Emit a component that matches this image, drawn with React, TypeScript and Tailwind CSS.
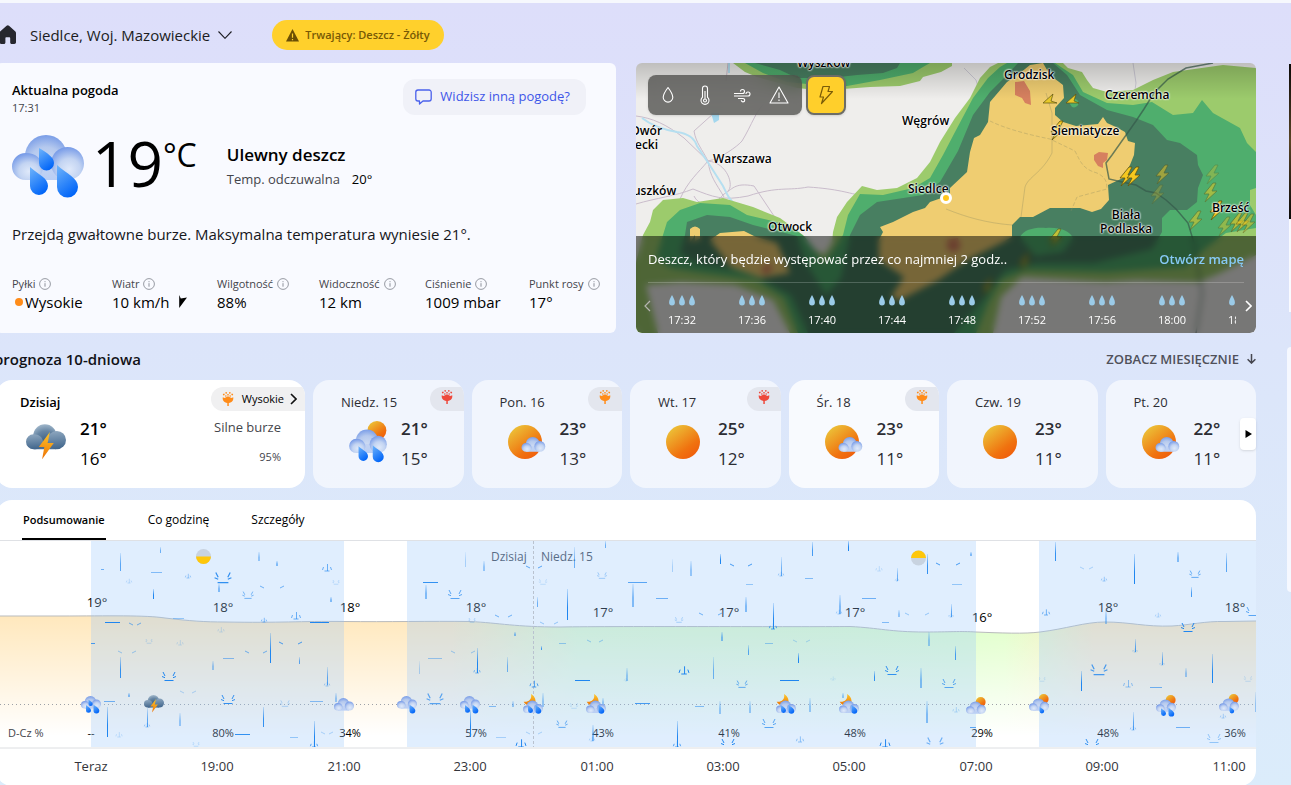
import { useState } from "react"
import type { SVGProps } from "react"

type Sky = "sun" | "moon" | "none"

interface WeatherIconProps extends SVGProps<SVGSVGElement> {
  sky?: Sky
  drops?: number
  storm?: boolean
}

interface Day {
  name: string
  high: string
  low: string
  icon: "rain" | "partly" | "sun"
  pollen?: "orange" | "red"
  bright?: boolean
}

const stats = [
  { label: "Pyłki", value: "Wysokie", dot: true },
  { label: "Wiatr", value: "10 km/h", arrow: true },
  { label: "Wilgotność", value: "88%" },
  { label: "Widoczność", value: "12 km" },
  { label: "Ciśnienie", value: "1009 mbar" },
  { label: "Punkt rosy", value: "17°" },
]

const days: Day[] = [
  { name: "Niedz. 15", high: "21°", low: "15°", icon: "rain", pollen: "red" },
  { name: "Pon. 16", high: "23°", low: "13°", icon: "partly", pollen: "orange" },
  { name: "Wt. 17", high: "25°", low: "12°", icon: "sun", pollen: "red" },
  { name: "Śr. 18", high: "23°", low: "11°", icon: "partly", pollen: "orange", bright: true },
  { name: "Czw. 19", high: "23°", low: "11°", icon: "sun" },
  { name: "Pt. 20", high: "22°", low: "11°", icon: "partly" },
]

const rainTimes = ["17:32", "17:36", "17:40", "17:44", "17:48", "17:52", "17:56", "18:00", "18:04"]

const tabs = ["Podsumowanie", "Co godzinę", "Szczegóły"]

const hours = [
  { x: 91, time: "Teraz", temp: "19°", y: 66, chance: "--" },
  { x: 217, time: "19:00", temp: "18°", y: 71, chance: "80%" },
  { x: 344, time: "21:00", temp: "18°", y: 71, chance: "34%" },
  { x: 470, time: "23:00", temp: "18°", y: 71, chance: "57%" },
  { x: 597, time: "01:00", temp: "17°", y: 76, chance: "43%" },
  { x: 723, time: "03:00", temp: "17°", y: 76, chance: "41%" },
  { x: 849, time: "05:00", temp: "17°", y: 76, chance: "48%" },
  { x: 976, time: "07:00", temp: "16°", y: 81, chance: "29%" },
  { x: 1102, time: "09:00", temp: "18°", y: 71, chance: "48%" },
  { x: 1229, time: "11:00", temp: "18°", y: 71, chance: "36%" },
]

const chartIcons: { x: number; y: number; sky: Sky; drops: number; storm?: boolean }[] = [
  { x: 91, y: 155, sky: "none", drops: 3 },
  { x: 154, y: 154, sky: "none", drops: 0, storm: true },
  { x: 344, y: 157, sky: "none", drops: 0 },
  { x: 407, y: 155, sky: "none", drops: 1 },
  { x: 470, y: 155, sky: "none", drops: 2 },
  { x: 533, y: 153, sky: "moon", drops: 2 },
  { x: 596, y: 153, sky: "moon", drops: 1 },
  { x: 786, y: 153, sky: "moon", drops: 2 },
  { x: 849, y: 153, sky: "moon", drops: 1 },
  { x: 976, y: 156, sky: "sun", drops: 0 },
  { x: 1039, y: 153, sky: "sun", drops: 1 },
  { x: 1166, y: 154, sky: "sun", drops: 2 },
  { x: 1229, y: 153, sky: "sun", drops: 1 },
]

// [x, top, bottom, opacity]
const streaks = [
  [120, 12, 30, 0.7], [160, 6, 12, 0.6], [153, 48, 58, 1], [258, 11, 20, 0.4], [276, 20, 25, 0.5], [218, 43, 51, 0.5],
  [270, 92, 122, 1], [120, 116, 137, 0.9], [212, 120, 129, 0.4], [299, 116, 123, 0.7], [327, 126, 144, 0.7], [128, 152, 156, 0.5],
  [335, 152, 161, 0.4], [107, 166, 196, 1], [147, 167, 186, 0.7], [179, 172, 185, 0.4], [263, 166, 186, 0.9], [314, 180, 206, 1],
  [330, 56, 61, 0.5], [425, 44, 58, 0.5], [419, 120, 133, 0.3], [465, 11, 26, 0.3], [483, 20, 30, 0.4], [574, 6, 27, 0.6],
  [605, 0, 7, 0.6], [567, 48, 79, 1], [537, 56, 66, 0.6], [514, 91, 95, 0.5], [477, 107, 132, 1], [507, 116, 131, 0.6],
  [541, 105, 109, 0.8], [626, 127, 140, 0.4], [542, 152, 166, 0.4], [512, 160, 166, 0.4], [470, 169, 196, 1], [592, 184, 200, 0.5],
  [602, 157, 164, 0.4], [632, 43, 66, 0.5], [672, 18, 31, 0.3], [690, 20, 35, 0.4], [720, 13, 23, 1], [781, 16, 35, 0.6],
  [812, 1, 15, 0.8], [848, 0, 10, 1], [773, 62, 88, 1], [745, 56, 71, 0.5], [839, 54, 73, 0.5], [721, 91, 100, 0.5],
  [748, 104, 114, 0.7], [713, 116, 138, 0.6], [798, 112, 122, 1], [677, 180, 206, 1], [719, 160, 173, 0.4], [749, 160, 172, 0.4],
  [809, 157, 171, 0.4], [842, 152, 157, 0.4], [897, 27, 40, 0.6], [927, 13, 33, 0.9], [970, 11, 15, 0.5], [898, 69, 76, 0.4],
  [951, 63, 76, 0.7], [928, 91, 105, 0.4], [955, 105, 119, 0.8], [874, 130, 140, 0.9], [920, 127, 147, 0.5], [926, 160, 182, 0.5],
  [1055, 1, 20, 0.9], [1134, 13, 43, 1], [1177, 11, 21, 0.5], [1226, 12, 31, 0.7], [1191, 46, 56, 0.8], [1105, 69, 83, 0.4],
  [1135, 98, 111, 0.7], [1162, 111, 124, 0.7], [1212, 113, 142, 1], [1081, 130, 150, 1], [1185, 127, 136, 0.4], [1133, 171, 189, 0.7],
  [1255, 151, 171, 0.4],
]

// [left, right, y, opacity]
const puddles = [
  [101, 104, 28, 0.6], [151, 162, 31, 0.5], [105, 120, 81, 1], [173, 184, 77, 0.4], [310, 329, 81, 1], [223, 234, 117, 0.5],
  [104, 115, 160, 0.6], [235, 250, 193, 0.9], [310, 323, 160, 0.5], [290, 298, 196, 0.4], [207, 221, 206, 0.5], [423, 438, 41, 0.9],
  [91, 95, 102, 0.8], [428, 442, 117, 0.4], [575, 590, 139, 1], [559, 566, 102, 0.4], [489, 496, 165, 0.5], [496, 506, 196, 0.3],
  [635, 650, 162, 0.8], [628, 647, 41, 0.7], [656, 668, 57, 0.6], [746, 753, 43, 0.4], [805, 813, 37, 0.5], [765, 773, 102, 0.4],
  [780, 799, 139, 1], [695, 704, 165, 0.5], [862, 876, 57, 0.6], [952, 962, 43, 0.4], [882, 889, 81, 0.5], [970, 976, 186, 0.7],
  [1150, 1162, 146, 0.6], [1176, 1190, 186, 0.6], [1135, 1150, 206, 0.7],
]

// [x, base y, scale, opacity]
const splashes = [
  [223, 41, 1.2, 0.9], [248, 57, 0.8, 0.7], [169, 139, 1, 1], [228, 162, 1, 0.9], [285, 165, 0.7, 0.4], [149, 102, 0.5, 0.4],
  [196, 205, 0.5, 0.4], [336, 43, 0.5, 0.4], [455, 57, 1, 0.7], [435, 162, 1.2, 0.7], [602, 37, 0.7, 0.5], [543, 43, 0.6, 0.3],
  [472, 81, 0.5, 0.5], [562, 186, 0.8, 0.8], [574, 167, 0.6, 0.3], [679, 81, 0.6, 0.5], [742, 146, 0.8, 0.8], [769, 186, 1, 0.7],
  [728, 206, 1, 1], [892, 133, 1, 0.9], [949, 146, 1, 0.7], [935, 206, 1.2, 0.6], [1195, 36, 0.8, 0.8], [1188, 90, 1, 1],
  [1099, 133, 1.2, 0.8], [1042, 140, 0.5, 0.3], [1248, 140, 0.6, 0.3], [1092, 206, 1, 0.9], [1214, 201, 1, 0.4], [1253, 74, 1, 0.7],
]

const impacts = [
  [129, 42, 0.6, 0.4], [188, 37, 0.6, 0.7], [264, 81, 0.6, 0.9], [296, 78, 1, 0.7], [327, 30, 1, 0.7], [221, 91, 0.7, 0.3],
  [180, 104, 0.7, 0.3], [119, 196, 0.7, 0.3], [314, 206, 0.8, 1], [327, 145, 0.6, 0.7], [147, 186, 0.6, 0.7], [477, 132, 0.7, 0.9],
  [534, 146, 0.9, 0.9], [521, 206, 1.1, 1], [592, 200, 0.6, 0.5], [626, 140, 0.4, 0.4], [684, 133, 1.1, 1], [781, 35, 0.6, 0.7],
  [773, 88, 0.8, 1], [839, 73, 0.6, 0.6], [833, 139, 0.5, 0.3], [800, 201, 0.8, 0.6], [677, 206, 0.8, 1], [897, 40, 0.4, 0.7],
  [885, 206, 1.1, 1], [879, 30, 0.7, 0.3], [951, 76, 0.5, 0.7], [1046, 74, 0.8, 0.8], [1104, 40, 0.6, 0.7], [1158, 76, 0.6, 0.5],
  [1128, 146, 1, 0.5], [956, 171, 0.7, 0.4], [1223, 177, 0.6, 0.6], [1135, 111, 0.5, 0.7], [1162, 124, 0.5, 0.6], [1133, 189, 0.6, 0.7],
]

// [left, right, y, opacity]
const ticks = [
  [131, 139, 83, 0.6], [262, 282, 46, 0.6], [281, 300, 102, 0.8], [247, 265, 111, 0.6], [120, 134, 111, 0.4], [182, 194, 151, 0.3],
  [323, 331, 192, 0.3], [528, 540, 26, 0.7], [497, 510, 75, 0.6], [732, 750, 24, 0.8], [701, 720, 73, 0.6], [589, 601, 100, 0.4],
  [795, 808, 100, 0.3], [453, 473, 111, 0.4], [528, 540, 192, 0.3], [542, 556, 82, 0.4], [938, 958, 23, 0.8], [907, 927, 73, 0.4],
  [1082, 1091, 27, 0.3],
]

const curve =
  "M-4 75 L60 75 C110 75 145 74 165 77 C190 80 205 81 225 81 C280 82 300 80 344 80.5 S430 80 470 80.5 C500 82 515 86 560 86 C620 85 800 86 850 85.5 C880 87 890 91 925 91 C950 91 960 90 976 91 C1000 92 1025 93 1040 91 C1065 88 1085 81 1105 81 C1130 81 1145 86 1172 85 C1190 84 1205 80 1225 80.5 L1256 80"

function Gradients() {
  return (
    <svg width="0" height="0" className="absolute" aria-hidden="true">
      <defs>
        <radialGradient id="puffTop" cx="0.5" cy="0.7" r="0.75">
          <stop offset="0" stopColor="#cfdcf3" />
          <stop offset="0.55" stopColor="#b5c9ee" />
          <stop offset="1" stopColor="#6f95e6" />
        </radialGradient>
        <radialGradient id="puffSide" cx="0.55" cy="0.68" r="0.66">
          <stop offset="0" stopColor="#dfe9fa" />
          <stop offset="0.5" stopColor="#c3d4f2" />
          <stop offset="1" stopColor="#7a9de8" />
        </radialGradient>
        <linearGradient id="puffBase" x1="0" y1="0" x2="0" y2="1">
          <stop offset="0" stopColor="#c3d3f1" />
          <stop offset="1" stopColor="#b9cef5" />
        </linearGradient>
        <radialGradient id="stormTop" cx="0.55" cy="0.8" r="0.85">
          <stop offset="0" stopColor="#34587c" />
          <stop offset="0.6" stopColor="#6685a3" />
          <stop offset="1" stopColor="#aabfd1" />
        </radialGradient>
        <linearGradient id="stormSide" x1="0.3" y1="0" x2="0.4" y2="1">
          <stop offset="0" stopColor="#8ea7bf" />
          <stop offset="1" stopColor="#41668c" />
        </linearGradient>
        <linearGradient id="stormBase" x1="0" y1="0" x2="0" y2="1">
          <stop offset="0" stopColor="#3f6388" />
          <stop offset="1" stopColor="#4d7197" />
        </linearGradient>
        <linearGradient id="drop" x1="0.1" y1="0" x2="0.6" y2="1">
          <stop offset="0" stopColor="#6cb2fb" />
          <stop offset="1" stopColor="#0165f8" />
        </linearGradient>
        <linearGradient id="sun" x1="0.15" y1="0.1" x2="0.75" y2="0.9">
          <stop offset="0" stopColor="#ecc037" />
          <stop offset="0.75" stopColor="#f0720f" />
          <stop offset="1" stopColor="#f0620c" />
        </linearGradient>
        <linearGradient id="bolt" x1="0.5" y1="0" x2="0.4" y2="1">
          <stop offset="0" stopColor="#fcc62a" />
          <stop offset="1" stopColor="#ee7205" />
        </linearGradient>
      </defs>
    </svg>
  )
}

function Cloud({ storm = false }: { storm?: boolean }) {
  return (
    <>
      <circle cx="34" cy="21" r="21" fill={storm ? "url(#stormTop)" : "url(#puffTop)"} />
      <path d="M14 28h40v17H14z" fill={storm ? "url(#stormBase)" : "url(#puffBase)"} />
      <path d="M13.500 18C24 18 30 24 31 32c0 8-6 13-14 13h-3.500a13.500 13.500 0 0 1 0-27z" fill={storm ? "url(#stormSide)" : "url(#puffSide)"} />
      <circle cx="55.500" cy="28.500" r="16.500" fill={storm ? "url(#stormSide)" : "url(#puffSide)"} />
    </>
  )
}

function WeatherIcon({ sky = "none", drops = 0, storm = false, ...rest }: WeatherIconProps) {
  const singleShower = drops === 1 && sky === "sun"

  return (
    <svg viewBox={sky === "none" ? "0 0 72 64" : "0 -16 72 80"} aria-hidden="true" {...rest}>
      {sky === "sun" && <circle cx="53" cy="2" r="18" fill="url(#sun)" />}
      {sky === "moon" && <path d="M29-16c14 8 20 24 14 38-12 8-33 4-41-10 17 2 31-8 27-28z" fill="url(#bolt)" />}
      <g transform={sky === "moon" ? "translate(0 8)" : undefined}>
        <Cloud storm={storm} />
      </g>
      <g transform={sky === "moon" ? "translate(0 -7)" : undefined}>
        {drops === 3 && <path d="M27 13v15a7.500 7.500 0 1 0 15 0c0-6-7-10-15-15z" fill="url(#drop)" />}
        {drops >= 2 && <path d="M18 32v19a9 9 0 1 0 18 0c0-8-9-11-18-19z" fill="url(#drop)" />}
        {drops >= 1 && !singleShower && <path d="M45 30v22a10.500 10.500 0 1 0 21 0c0-9-11-13-21-22z" fill="url(#drop)" />}
        {singleShower && <path d="M38 30v16a8.500 8.500 0 1 0 17 0c0-7-9-9-17-16z" fill="url(#drop)" />}
      </g>
      {storm && <path d="M43 14 23 41h10l-4 22 21-29H39z" fill="url(#bolt)" />}
    </svg>
  )
}

function DayIcon({ icon }: { icon: Day["icon"] }) {
  if (icon === "rain") {
    return <WeatherIcon sky="sun" drops={2} className="-mb-1 h-[42px] w-[38px] shrink-0" />
  }
  return (
    <svg viewBox="0 0 38 34" className="h-[34px] w-[38px]" aria-hidden="true">
      <circle cx="17" cy="17" r="17" fill="url(#sun)" />
      {icon === "partly" && (
        <g transform="translate(13.500 12) scale(0.33)">
          <Cloud />
        </g>
      )}
    </svg>
  )
}

function PollenIcon({ color }: { color: string }) {
  return (
    <svg viewBox="0 0 12 14" className="h-3.5 w-3" fill={color} aria-hidden="true">
      <path d="M.8 5.200 2.600 6 6 4.200 9.400 6l1.800-.8c.6 3-1 5.300-4.400 5.800V14H5.300v-3C2 10.500.2 8.200.8 5.200z" />
      <path d="m.8 2 1.500-.5.5 1.500-1.500.5zM3.300.3 4.700 0l.4 1.400-1.400.3zM7.300 0l1.400.3-.4 1.400-1.400-.3zM9.700 1.500l1.500.5-.5 1.500-1.500-.5zM5.300 2h1.400v1.400H5.300zM3.300 3.200l1.300.4-.3 1.200-1.300-.4zM8.700 3.200l.3 1.200-1.300.4-.3-1.200z" />
    </svg>
  )
}

function InfoIcon() {
  return (
    <svg viewBox="0 0 12 12" className="h-3 w-3 shrink-0" fill="none" stroke="#8c8f99" aria-hidden="true">
      <circle cx="6" cy="6" r="5.400" strokeWidth="0.9" />
      <path d="M6 5.200v3.500M6 3.200v1" strokeWidth="1" />
    </svg>
  )
}

function Header() {
  return (
    <header className="flex h-[60px] items-center pt-1">
      <a href="#home" aria-label="Strona główna" className="mr-[13px] block">
        <svg viewBox="0 0 21 20" className="h-5 w-[21px]" fill="#26272e">
          <path d="M10.600.8a1.800 1.800 0 0 1 2.400 0l6.400 5.800c.4.4.6.8.6 1.400v9.300c0 1-.7 1.700-1.700 1.700h-2.600c-.9 0-1.500-.6-1.500-1.500v-4.300c0-.6-.4-1-1-1h-2.800c-.6 0-1 .4-1 1v4.300c0 .9-.6 1.500-1.500 1.500H5.200c-1 0-1.700-.7-1.700-1.700V8c0-.6.2-1 .6-1.400z" />
        </svg>
      </a>
      <button type="button" className="flex items-center gap-2 text-[15px] leading-6 text-[#1b1c22]">
        Siedlce, Woj. Mazowieckie
        <svg viewBox="0 0 14 8" className="h-2 w-3.5" fill="none" stroke="#1b1c22" strokeWidth="1.100">
          <path d="m.5.5 6.500 6.800L13.500.5" />
        </svg>
      </button>
      <button type="button" className="ml-10 flex h-[30px] items-center gap-1.5 rounded-full bg-[#ffd02c] px-3.5 text-[11px] font-semibold text-[#775905]">
        <svg viewBox="0 0 13 13" className="h-[13px] w-[13px]" aria-hidden="true">
          <path d="M6.500 0 13 12.600H0z" fill="#6b4f04" />
          <path d="M6.500 4.500v4.300M6.500 10v1.300" stroke="#ffd02c" strokeWidth="1.200" />
        </svg>
        Trwający: Deszcz - Żółty
      </button>
    </header>
  )
}

function CurrentWeather() {
  return (
    <section className="h-[270px] rounded-md bg-[#f9faff] p-4 text-black">
      <div className="flex h-9 items-start justify-between pr-3.5">
        <div>
          <h2 className="text-[13px] leading-[22px] font-semibold">Aktualna pogoda</h2>
          <p className="text-[11px] leading-[14px] text-[#44454b]">17:31</p>
        </div>
        <button type="button" className="flex h-9 items-center gap-2 rounded-xl bg-[#f0f1f8] pr-4 pl-3 text-[13px] text-[#3e56e8]">
          <svg viewBox="0 0 17 16" className="h-4 w-[17px]" fill="none" stroke="#4a61ec" strokeWidth="1.300" aria-hidden="true">
            <path d="M3 1h11a2.200 2.200 0 0 1 2.200 2.200v6.600A2.200 2.200 0 0 1 14 12H8l-3.500 3v-3H3A2.200 2.200 0 0 1 .8 9.800V3.200A2.200 2.200 0 0 1 3 1z" strokeLinejoin="round" />
          </svg>
          Widzisz inną pogodę?
        </button>
      </div>
      <div className="mt-3 flex h-20 items-center">
        <WeatherIcon drops={3} className="h-16 w-[72px]" />
        <div className="ml-2 flex items-start pb-2">
          <span className="text-[62px] leading-[72px]">19</span>
          <span className="mt-2.5 text-[32px] leading-9">°C</span>
        </div>
        <div className="ml-[30px]">
          <p className="text-[17px] leading-6 font-semibold">Ulewny deszcz</p>
          <p className="flex gap-3 text-[13px] leading-6 text-[#44454b]">
            Temp. odczuwalna <span className="text-black">20°</span>
          </p>
        </div>
      </div>
      <p className="mt-[15px] text-[15px] leading-6 text-[#16171c]">Przejdą gwałtowne burze. Maksymalna temperatura wyniesie 21°.</p>
      <dl className="mt-[30px] grid grid-cols-[100px_105px_102px_106px_104px_auto] whitespace-nowrap">
        {stats.map((stat) => (
          <div key={stat.label}>
            <dt className="flex items-center gap-1 text-[11px] leading-4 text-[#44454b]">
              {stat.label}
              <InfoIcon />
            </dt>
            <dd className="flex items-center text-[15px] leading-5">
              {stat.dot && <span className="mr-0.5 ml-[3px] h-2 w-2 rounded-full bg-[#ff8c1a]" />}
              {stat.value}
              {stat.arrow && (
                <svg viewBox="0 0 10 14" className="ml-2 h-3.5 w-2.5" aria-hidden="true">
                  <path d="M1.200 0 2.800 3.600 9 2.500 1.200 13z" fill="#000" />
                </svg>
              )}
            </dd>
          </div>
        ))}
      </dl>
    </section>
  )
}

const places = [
  { name: "Wyszków", className: "left-[161px] -top-2.5" },
  { name: "Grodzisk", className: "left-[368px] top-0.5" },
  { name: "Czeremcha", className: "left-[469px] top-[22px]" },
  { name: "Węgrów", className: "left-[266px] top-12" },
  { name: "Siemiatycze", className: "left-[415px] top-[58px]" },
  { name: "Warszawa", className: "left-[77px] top-[86px]" },
  { name: "Siedlce", className: "left-[272px] top-[116px]" },
  { name: "Otwock", className: "left-[132px] top-[154px]" },
  { name: "Brześć", className: "left-[576px] top-[135px]" },
]

const bolts = [
  [484, 104, 1], [491, 104, 1], [520, 102, 0.5], [515, 122, 0.25], [570, 102, 0.3], [568, 120, 0.5], [574, 138, 1],
  [553, 148, 0.5], [582, 154, 0.4], [594, 150, 0.6], [600, 150, 0.6], [606, 151, 0.5], [415, 58, 1], [413, 166, 0.7], [382, 190, 0.5],
  [345, 215, 0.5],
]

function MapArt() {
  return (
    <svg viewBox="0 0 620 270" preserveAspectRatio="xMidYMid slice" className="absolute inset-0 h-full w-full" aria-hidden="true">
      <rect width="620" height="270" fill="#efeeec" />
      <g fill="none" stroke="#c9bccb" strokeWidth="1">
        <path d="M0 141c20-6 40-8 57-15 20 8 30 12 55 7 30-10 40-5 60-9 30 2 40 6 55 9" />
        <path d="M72 98c-10 12-20 20-28 38m28-38c2 16 8 22 16 36M72 98C66 86 60 80 58 68L78 50M72 98c20 2 26 25 20 30m-34 5c6 12 20 10 30-2 8-4 10-12 30-8l20 30 20 16" />
        <path d="M0 53c16 2 30 8 48 22l24 23c12-2 30-15 34-20 10-16 14-32 26-41M92 0l-2 18" />
      </g>
      <g fill="none" stroke="#b5dff0" strokeWidth="2">
        <path d="M6 55c10 8 24 12 35 14 14 2 18 8 20 14l12 18 14 22c4 8 6 14 14 20M93 0v10" />
        <path d="M75 50h8v7l-5 3z" fill="#a3d7ee" stroke="none" />
      </g>
      <path d="M497 0l3 20-2 14M328 5l12 12 4 14" fill="none" stroke="#cdcbd6" />
      <path d="M97 0 109 9 121 14 161 25 181 27 207 26 234 24 264 23 284 18 287 14 305 9 316 3V0z" fill="#9ccb6c" />
      <path d="M109 0 127 10 151 19 181 22 211 23 244 17 277 10 287 4 294 0z" fill="#4fae6d" />
      <path d="M119 0 144 7 161 15 194 15 221 12 247 10 261 5 264 0z" fill="#487f61" />

      <path
        d="M0 200 7 172 14 159 17 147 27 137 47 135 61 139 87 135 117 144 144 155 167 172 178 186 188 192 196 180 197 169 201 154 211 139 226 123 241 127 261 125 281 115 294 99 304 79 319 55 334 35 344 15 354 4 362 0H427L432 5 446 9 451 17 457 25 471 29 497 27 517 17 537 9 587 2 620 5V192L584 210 563 219 500 217 470 219 386 214 365 234 357 270H154L137 237 99 222 45 219 10 222 22 270H0z"
        fill="#9ccb6c"
      />
      <path
        d="M20 195 27 172 31 159 44 147 64 140 94 142 111 152 141 159 157 165 169 174 188 200 207 172 212 152 224 131 247 132 277 125 294 115 307 92 319 69 337 35 352 15 364 4 371 0H419L437 12 447 29 471 40 497 42 516 39 537 52 557 50 566 37 577 50 604 65 611 80 620 89V125L614 127V142L620 152V165L590 170 571 184 550 204 470 209 390 207 365 217 352 240 340 270H162L148 235 120 217 60 209 35 205z"
        fill="#4fae6d"
      />
      <path
        d="M44 190 49 172 51 159 71 152 94 154 117 162 161 173 170 200 190 232 205 215 214 172 224 152 241 139 287 132 304 119 322 88 337 52 354 29 371 12 382 0H417L431 12 444 32 471 47 497 54 517 62 531 77 544 80 561 92 562 102 567 112 562 125 561 139 551 147 534 147 526 155V169L516 186 458 200 400 200 369 207 344 240 318 270H172L155 232 110 208 60 200z"
        fill="#487f61"
      />
      <path d="M384 174c4-8 16-10 26-9 14-1 24 3 27 10l-10 14-28 4z" fill="#4fae6d" />
      <path
        d="M394 2 407 0 414 12 427 22 428 35 419 45V52L427 59 440 63 451 62 462 61 467 54 471 60 480 64 489 69 492 78 499 80 498 92 494 102 487 115 472 122 473 137 465 146 456 149 444 145 414 145 397 154 384 154 376 162 376 174 365 180 331 197 302 217 264 237 255 234 268 214 243 197 243 177 247 169 244 164 257 159 277 149 289 145 294 139 314 132 314 125 331 109 334 89 338 75 344 72 352 59 354 39 371 19 384 10z"
        fill="#efcd71"
      />
      <path d="M54 180V166q5-5 10 0v10l-5 2v-6zM74 177 84 170 108 168 120 174 141 180 154 210 125 215 95 204z" fill="#efcd71" />
      <path d="M379 19 388 18 394 28 395 42 389 40 386 35 379 32zM458 92 463 89 472 90 471 97 467 100V105L462 103 458 97zM311 177 322 175 325 184 318 190 311 186zM125 206l8-6 4 6-8 6z" fill="#d6805f" />
      <path d="M432 38c2-3 8-3 10 0s-2 8-6 6z" fill="#4fae6d" />
      <g fill="none" stroke="#8f8b62" strokeOpacity="0.350">
        <path d="M354 58c16 8 40 14 60 18l25 12c6 12 8 18 22 22 8 4 10 8 10 16l-30 8-6 14" strokeDasharray="4 2" />
        <path d="M410 30l6 20v40c-10 20-24 24-27 34l-4 30M310 146c20 8 40 14 66 16" />
      </g>
      <path d="M577 0 550 5 532 16 518 30 508 46 500 58 488 75 476 92 470 100 473 116 486 119 500 122 510 128 520 130 530 137 540 146 552 160 558 180 566 230 560 270" fill="none" stroke="#35594a" strokeOpacity="0.700" strokeWidth="1.500" />
      {bolts.map(([x, y, opacity], i) => (
        <path key={i} d="M9 0 0 11 5 11 1 19 13 8 8 8 12 0z" transform={`translate(${x} ${y})`} opacity={opacity} fill="#f5c81f" stroke="#5d5413" strokeWidth="0.8" />
      ))}
      <path d="M407 40 417 31l-2 7 6 2zM430 40 440 31l-2 7 5 2z" fill="#e8c92a" stroke="#5d5413" strokeWidth="0.700" />
    </svg>
  )
}

function RainMap() {
  const [layer, setLayer] = useState("Burze")
  const layers = [
    { name: "Opady", path: "M10 2.500c3 4 4.800 6.500 4.800 9.800a4.800 4.800 0 0 1-9.600 0C5.200 9 7 6.500 10 2.500z" },
    { name: "Temperatura", path: "M7.500 3.500a2.500 2.500 0 0 1 5 0v8.800a4 4 0 1 1-5 0zM10 6v8.500M10 14a1.500 1.500 0 1 0 0 3 1.500 1.500 0 0 0 0-3z" },
    { name: "Wiatr", path: "M2 8.500h8.500a2 2 0 1 0-2-2M2 11h14a2 2 0 1 0-2-2M6 13.500h5a1.700 1.700 0 1 1-1.700 1.700" },
    { name: "Ostrzeżenia", path: "M10 2 19 18H1zM10 7.500v5.500M10 14.500v1.500" },
  ]

  return (
    <section className="relative flex h-[270px] flex-col justify-between overflow-hidden rounded-md">
      <MapArt />
      <div className="absolute inset-x-0 top-0 h-9 bg-linear-to-b from-black/20 to-transparent" />
      {places.map((place) => (
        <span key={place.name} className={`absolute text-[12px] leading-5 font-semibold text-black [text-shadow:0_0_2px_white,0_0_2px_white,0_0_2px_white] ${place.className}`}>
          {place.name}
        </span>
      ))}
      <span className="absolute top-[145px] left-[464px] text-center text-[12px] leading-3.5 font-semibold text-black [text-shadow:0_0_2px_white,0_0_2px_white,0_0_2px_white]">
        Biała
        <br />
        Podlaska
      </span>
      <span className="absolute top-[61px] -left-[5px] text-[12px] leading-3.5 font-semibold text-black [text-shadow:0_0_2px_white,0_0_2px_white]">
        Dwór
        <span className="block pl-1">ecki</span>
      </span>
      <span className="absolute top-[118px] -left-[3px] text-[12px] leading-5 font-semibold text-black [text-shadow:0_0_2px_white,0_0_2px_white]">uszków</span>
      <span className="absolute top-[129px] left-[304px] h-3 w-3 rounded-full border-[3px] border-white bg-[#ffc61c]" />

      <div className="relative flex gap-1 p-3">
        <div className="flex h-10 items-center rounded-lg bg-[#484846]/75 pr-[5px] pl-px shadow-sm backdrop-blur-sm">
          {layers.map((item) => (
            <button key={item.name} type="button" aria-label={item.name} onClick={() => setLayer(item.name)} className="flex h-9 w-[37px] items-center justify-center">
              <svg viewBox="0 0 20 20" className="h-5 w-5" fill="none" stroke="#fff" strokeWidth="1.100" strokeLinejoin="round">
                <path d={item.path} />
              </svg>
            </button>
          ))}
        </div>
        <button
          type="button"
          aria-label="Burze"
          aria-pressed={layer === "Burze"}
          onClick={() => setLayer("Burze")}
          className="flex h-10 w-10 items-center justify-center rounded-lg border-2 border-[#6d6d66] bg-[#ffcf2b] shadow-sm"
        >
          <svg viewBox="0 0 18 20" className="h-5 w-[18px]" fill="none" stroke="#7b5d08" strokeWidth="1.200" strokeLinejoin="round">
            <path d="M6 1.500h6.500L11 6.500h4.500L4.500 18.500l2-6.500H3z" />
          </svg>
        </button>
      </div>

      <div className="relative h-[97px] bg-black/50 px-3 pt-3 text-white backdrop-blur-[3px]">
        <div className="flex items-center justify-between text-[13px] leading-[22px]">
          <p>Deszcz, który będzie występować przez co najmniej 2 godz..</p>
          <a href="#map" className="font-semibold text-[#86c9f5]">
            Otwórz mapę
          </a>
        </div>
        <div className="mt-3 border-t border-white/20" />
        <div className="mr-2 flex overflow-hidden pt-3">
          {rainTimes.map((time) => (
            <div key={time} className="flex w-[70px] shrink-0 flex-col items-center pr-0.5">
              <svg viewBox="0 0 28 11" className="h-[11px] w-7" fill="#9bcbe8" aria-hidden="true">
                <path d="M4 0c1.800 3.500 2.900 5 2.900 7.500a2.900 2.900 0 0 1-5.800 0C1.100 5 2.200 3.500 4 0zM14 0c1.800 3.500 2.900 5 2.900 7.500a2.900 2.900 0 0 1-5.800 0C11.100 5 12.200 3.500 14 0zM24 0c1.800 3.500 2.900 5 2.900 7.500a2.900 2.900 0 0 1-5.800 0C21.100 5 22.200 3.500 24 0z" />
              </svg>
              <span className="mt-1 text-[11px] leading-5">{time}</span>
            </div>
          ))}
        </div>
        <button type="button" aria-label="Poprzednie" className="absolute bottom-[21px] left-2">
          <svg viewBox="0 0 7 12" className="h-3 w-[7px]" fill="none" stroke="#b5b5b0" strokeWidth="1.200">
            <path d="M6 1 1 6l5 5" />
          </svg>
        </button>
        <button type="button" aria-label="Następne" className="absolute right-1 bottom-[21px]">
          <svg viewBox="0 0 7 12" className="h-3 w-[7px]" fill="none" stroke="#fff" strokeWidth="1.600">
            <path d="m1 1 5 5-5 5" />
          </svg>
        </button>
      </div>
    </section>
  )
}

function DailyForecast() {
  return (
    <section>
      <div className="flex h-[47px] items-center justify-between pt-1">
        <h2 className="-ml-0.5 text-[15px] leading-6 font-semibold text-[#111217]">prognoza 10-dniowa</h2>
        <button type="button" className="flex items-center gap-2 text-[13px] leading-5 font-semibold text-[#50515a]">
          ZOBACZ MIESIĘCZNIE
          <svg viewBox="0 0 9 10" className="h-2.5 w-[9px]" fill="none" stroke="#46474f" strokeWidth="1.500">
            <path d="M4.500 0v9M.6 5.200l3.900 3.900 3.900-3.900" />
          </svg>
        </button>
      </div>
      <div className="relative flex h-[108px] gap-2">
        <article className="flex w-[309px] shrink-0 justify-between overflow-hidden rounded-2xl bg-white pt-[7px] pl-6 text-black">
          <div>
            <h3 className="text-[13px] leading-[30px] font-semibold">Dzisiaj</h3>
            <div className="flex gap-3.5 pl-1.5">
              <WeatherIcon storm className="mt-[7px] h-9 w-10" />
              <div className="text-[17px] leading-[30px]">
                <p className="-mt-[3px] font-semibold">21°</p>
                <p>16°</p>
              </div>
            </div>
          </div>
          <div className="flex flex-col items-end">
            <button type="button" className="flex h-6 items-center rounded-l-full bg-[#f0f0f1] pr-2 pl-[11px] text-[11px]">
              <PollenIcon color="#ff8c1a" />
              <span className="ml-2">Wysokie</span>
              <svg viewBox="0 0 7 12" className="ml-1.5 h-3 w-[7px]" fill="none" stroke="#111" strokeWidth="1.600">
                <path d="m1 1 5 5-5 5" />
              </svg>
            </button>
            <p className="mt-1.5 pr-6 text-[13px] leading-5 text-[#44454b]">Silne burze</p>
            <p className="mt-2.5 pr-6 text-[11px] leading-5 text-[#44454b]">95%</p>
          </div>
        </article>
        {days.map((day) => (
          <article key={day.name} className={`relative min-w-0 flex-1 overflow-hidden rounded-2xl pt-[7px] pl-7 text-[#2c2d33] ${day.bright ? "bg-white/80" : "bg-white/60"}`}>
            <h3 className="text-[13px] leading-[30px]">{day.name}</h3>
            <div className="flex gap-3.5 pl-2">
              <div className="mt-2 flex h-[38px] w-[38px] items-end pb-1">
                <DayIcon icon={day.icon} />
              </div>
              <div className="text-[17px] leading-[30px]">
                <p className="-mt-[3px] font-semibold">{day.high}</p>
                <p>{day.low}</p>
              </div>
            </div>
            {day.pollen && (
              <span className="absolute top-[7px] right-0 flex h-6 w-[34px] items-start rounded-l-full bg-[#e3e6ee] pt-[3px] pl-[11px]">
                <PollenIcon color={day.pollen === "red" ? "#ee493c" : "#ff8c1a"} />
              </span>
            )}
          </article>
        ))}
        <button type="button" aria-label="Następne dni" className="absolute top-[38px] right-0 flex h-8 w-4 items-center justify-center rounded bg-white shadow">
          <svg viewBox="0 0 7 8" className="h-2 w-[7px]">
            <path d="M.5 0v8L7 4z" fill="#000" />
          </svg>
        </button>
      </div>
    </section>
  )
}

function Rain() {
  return (
    <g fill="none" stroke="#1f86f0">
      {streaks.map(([x, top, bottom, opacity], i) => (
        <rect key={i} x={x} y={top} width={opacity === 0.4 || opacity === 0.5 ? 2 : 1} height={bottom - top} fill="url(#streak)" stroke="none" opacity={opacity} />
      ))}
      {puddles.map(([left, right, y, opacity], i) => (
        <path key={i} d={`M${left} ${y + 0.5}H${right}`} opacity={opacity} />
      ))}
      {splashes.map(([x, y, scale, opacity], i) => (
        <g key={i} transform={`translate(${x} ${y})`} opacity={opacity}>
          <path d="M-4.500.500h9M-7-3.500-4-2.300M-6-8l2 4M7-3.500 4-2.300M6-8 4-4" transform={`scale(${scale})`} />
        </g>
      ))}
      {impacts.map(([x, y, scale, opacity], i) => (
        <g key={i} transform={`translate(${x} ${y})`} opacity={opacity}>
          <path d="M.500 0v-7M-2.500 0h5M-4.500-1-3.500-4M4.500-1 3.500-4" transform={`scale(${scale})`} strokeWidth="0.900" />
        </g>
      ))}
      {ticks.map(([left, right, y, opacity], i) => (
        <path key={i} d={`M${left - 2} ${y - 1}l4 2M${right + 2} ${y - 1}l-4 2`} opacity={opacity} />
      ))}
    </g>
  )
}

function HourlyChart() {
  return (
    <svg viewBox="-4 0 1260 245" className="block w-full" fontFamily="'Open Sans', 'Noto Sans', sans-serif" role="img" aria-label="Prognoza godzinowa">
      <defs>
        <linearGradient id="warmth" gradientUnits="userSpaceOnUse" x1="0" y1="0" x2="1256" y2="0">
          <stop offset="0.360" stopColor="#ffe8bd" />
          <stop offset="0.460" stopColor="#dffbca" />
          <stop offset="0.760" stopColor="#dcffc8" />
          <stop offset="0.800" stopColor="#e0ffc8" />
          <stop offset="0.870" stopColor="#ffe8bd" />
        </linearGradient>
        <linearGradient id="fade" gradientUnits="userSpaceOnUse" x1="0" y1="75" x2="0" y2="195">
          <stop offset="0" stopColor="#fff" stopOpacity="0" />
          <stop offset="1" stopColor="#fff" stopOpacity="1" />
        </linearGradient>
        <linearGradient id="streak" x1="0" y1="0" x2="0" y2="1">
          <stop offset="0" stopColor="#1f86f0" stopOpacity="0.200" />
          <stop offset="0.6" stopColor="#1f86f0" />
        </linearGradient>
        <clipPath id="rainArea">
          <path d="M91 0h253v206H91zM407 0h569v206H407zM1039 0h217v206h-217z" />
        </clipPath>
      </defs>
      <path d={`${curve} V206H-4z`} fill="url(#warmth)" />
      <rect x="-4" y="73" width="1260" height="133" fill="url(#fade)" />
      <path d={curve} fill="none" stroke="#b9bbbd" />
      <g fill="#3d4654" fontSize="12">
        <text x="491" y="20">Dzisiaj</text>
        <text x="541" y="20">Niedz. 15</text>
      </g>
      <path d="M-4 163.500H1256" stroke="#9da0a6" strokeDasharray="1 3" />
      <g textAnchor="middle" fill="#000">
        {hours.map((hour) => (
          <g key={hour.x}>
            <text x={hour.x + 6} y={hour.y} fontSize="13">
              {hour.temp}
            </text>
            <text x={hour.chance === "--" ? hour.x : hour.x + 6} y="196" fontSize="11">
              {hour.chance}
            </text>
          </g>
        ))}
      </g>
      <text x="8" y="196" fontSize="11" fill="#44454b">
        D-Cz %
      </text>
      <path d="M91 0h253v206H91zM407 0h569v206H407zM1039 0h217v206h-217z" fill="#97c6fc" fillOpacity="0.300" />
      <path d="M533.500 0v206" stroke="#b9c2cf" strokeDasharray="3 2" />
      <g clipPath="url(#rainArea)">
        <Rain />
      </g>
      <g>
        <circle cx="203.500" cy="15.500" r="7.500" fill="#c8d3e0" />
        <path d="M196 15.500a7.500 7.500 0 0 0 15 0z" fill="#fec70b" />
        <circle cx="918.500" cy="17" r="7.500" fill="#c8d3e0" />
        <path d="M911 17a7.500 7.500 0 0 1 15 0z" fill="#fec70b" />
      </g>
      {chartIcons.map((icon) => (
        <WeatherIcon key={icon.x} x={icon.x - 10} y={icon.y} width="20" height={icon.sky === "none" ? 18 : 22} sky={icon.sky} drops={icon.drops} storm={icon.storm} />
      ))}
      <path d="M-4 207H1256" stroke="#dcdee1" strokeWidth="1" />
      <g textAnchor="middle" fill="#33343a" fontSize="13">
        {hours.map((hour) => (
          <text key={hour.x} x={hour.x} y="230">
            {hour.time}
          </text>
        ))}
      </g>
    </svg>
  )
}

function HourlyForecast() {
  const [active, setActive] = useState("Podsumowanie")

  return (
    <section className="mt-3 overflow-hidden rounded-2xl bg-white">
      <div className="flex h-[41px] gap-[42px] border-b border-[#dfe1e5] pl-[26px]">
        {tabs.map((tab) => (
          <button
            key={tab}
            type="button"
            onClick={() => setActive(tab)}
            className={`h-10 border-b-2 pt-0.5 leading-5 text-black ${active === tab ? "border-black px-px text-[11px] font-semibold" : "border-transparent text-[12px]"}`}
          >
            {tab}
          </button>
        ))}
      </div>
      <HourlyChart />
    </section>
  )
}

export default function App() {
  return (
    <div className="min-h-screen overflow-hidden border-t-[3px] border-[#f6f8fd] bg-linear-to-b from-[#dddefa] via-[#dce6fa] to-[#dbecfb] font-['Open_Sans','Noto_Sans',sans-serif]">
      <Gradients />
      <div className="flex">
        <main className="-ml-1 min-w-0 flex-1">
          <Header />
          <div className="grid grid-cols-2 gap-5">
            <CurrentWeather />
            <RainMap />
          </div>
          <DailyForecast />
          <HourlyForecast />
        </main>
        <aside className="w-[35px] shrink-0 pt-[61px] pl-[31px]">
          <div className="ml-0.5 h-[155px] bg-linear-to-b from-[#0c0a08] via-[#5a4526] to-[#0c0a08]" />
          <div className="ml-0.5 h-[93px] bg-[#f9faff]" />
          <div className="mt-[35px] h-[245px] rounded-l-xl bg-[#f5f8ff]" />
        </aside>
      </div>
    </div>
  )
}
